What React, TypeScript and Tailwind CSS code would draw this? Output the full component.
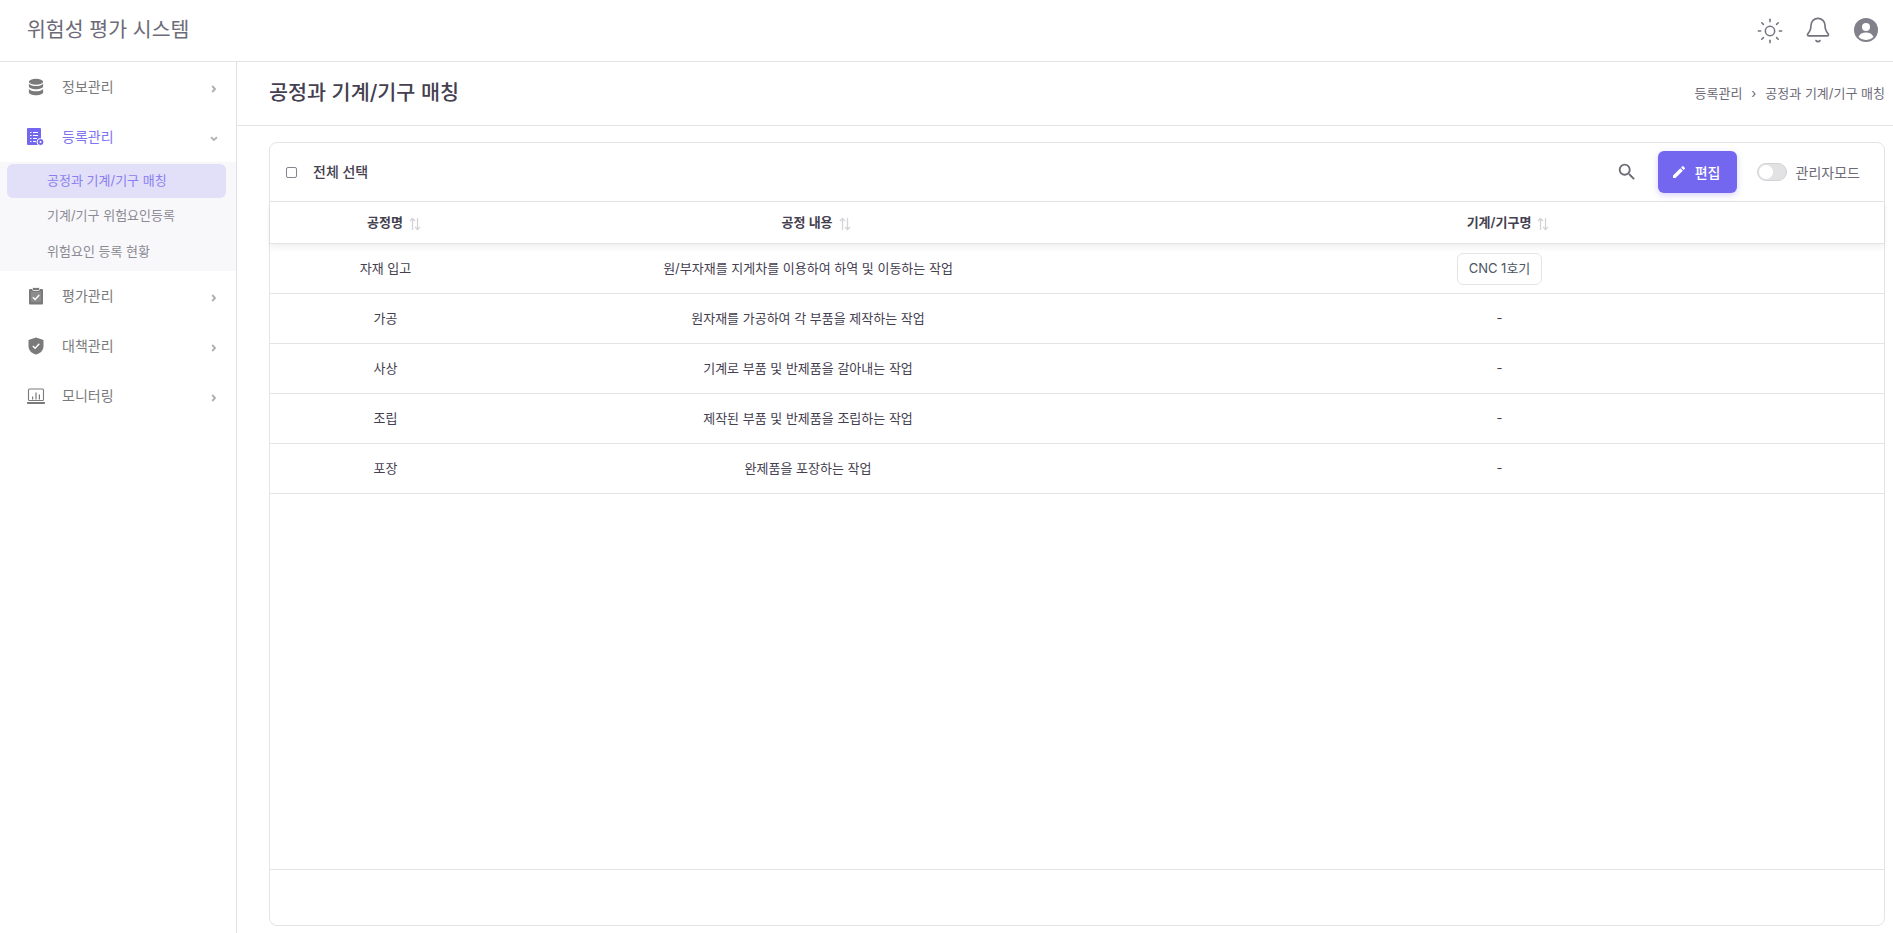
import React from "react";
import { Sun, Bell } from "lucide-react";

const font = "font-['Inter','Noto_Sans_CJK_KR',sans-serif]";

const IconDb = () => (
  <svg width="18" height="18" viewBox="0 0 24 24" fill="#7a7a7a">
    <ellipse cx="12" cy="5" rx="9.500" ry="4" />
    <path d="M2.500 7.600v3.400c0 2.200 4.300 4 9.500 4s9.500-1.800 9.500-4V7.600c-1.700 2-5.400 3.200-9.500 3.200S4.200 9.600 2.500 7.600z" />
    <path d="M2.500 14.600V19c0 2.200 4.300 4 9.500 4s9.500-1.800 9.500-4v-4.400c-1.700 2-5.400 3.200-9.500 3.200s-7.800-1.200-9.500-3.200z" />
  </svg>
);
const IconReg = () => (
  <svg width="18" height="18" viewBox="0 0 18 18">
    <path d="M1 0h12a1 1 0 0 1 1 1v16H1a1 1 0 0 1-1-1V1a1 1 0 0 1 1-1z" fill="#7367f0" />
    <path d="M3 4h1.500v1H3zM6 4h5v1H6zM3 7h1.500v1H3zM6 7h5v1H6zM3 10h1.500v1H3zM6 10h4v1H6zM3 13h1.500v1H3zM6 13h3v1H6z" fill="#fff" />
    <circle cx="13.500" cy="14" r="3.500" fill="#7367f0" stroke="#fff" />
    <circle cx="13.500" cy="14" r="1" fill="#fff" />
  </svg>
);
const IconClip = () => (
  <svg width="18" height="18" viewBox="0 0 18 18">
    <path d="M3 2h12a1 1 0 0 1 1 1v13.500a1 1 0 0 1-1 1H3a1 1 0 0 1-1-1V3a1 1 0 0 1 1-1z" fill="#7a7a7a" />
    <rect x="5.500" y="0.500" width="7" height="3" rx="1" fill="#7a7a7a" stroke="#fff" strokeWidth="0.800" />
    <rect x="4" y="5" width="10" height="10" fill="#8d8d8d" />
    <path d="M5.800 10.200l2.300 2.300 4.200-4.500" fill="none" stroke="#fff" strokeWidth="1.300" />
  </svg>
);
const IconShield = () => (
  <svg width="18" height="18" viewBox="0 0 18 18">
    <path d="M9 0.500L16.500 3v6c0 4.300-3 7.300-7.500 8.500C4.500 16.300 1.500 13.300 1.500 9V3z" fill="#7a7a7a" />
    <path d="M5.800 9l2.300 2.300 4.200-4.500" fill="none" stroke="#fff" strokeWidth="1.300" />
  </svg>
);
const IconMon = () => (
  <svg width="18" height="18" viewBox="0 0 18 18" fill="none">
    <rect x="1.500" y="2" width="15" height="11.500" rx="1" stroke="#7a7a7a" strokeWidth="1.100" />
    <path d="M0 15h18v1a1 1 0 0 1-1 1H1a1 1 0 0 1-1-1z" fill="#7a7a7a" />
    <path d="M5 9.500h1.200v3H5zM8.400 5.500h1.200v7H8.400zM11.800 7.500H13v5h-1.200z" fill="#7a7a7a" />
  </svg>
);

const Sort = () => (
  <svg width="12" height="14" viewBox="0 0 12 14" fill="none" stroke="#d4d4d8" strokeWidth="1.300" className="ml-[6px] mr-[-18px] mt-[2px]">
    <path d="M3.500 13V1.500M1 4l2.500-2.500L6 4" />
    <path d="M8.500 1v11.500M6 10l2.500 2.500L11 10" />
  </svg>
);

const ChevR = () => (
  <svg width="6" height="8" viewBox="0 0 6 8" fill="none" stroke="#b0b0b0" strokeWidth="1.900" className="mt-[4px] mr-[1px]">
    <path d="M1.200 1l2.800 3-2.800 3" />
  </svg>
);
const ChevD = () => (
  <svg width="8" height="6" viewBox="0 0 8 6" fill="none" stroke="#b4b4b4" strokeWidth="1.900" className="mt-[4px]">
    <path d="M1 1.200l3 2.800 3-2.800" />
  </svg>
);

const Item = ({ icon, label, active = false, open = false }: { icon: React.ReactNode; label: string; active?: boolean; open?: boolean }) => (
  <div className="h-[50px] flex items-center pl-[27px] pr-[18px]">
    <span className="w-[35px] flex items-center">{icon}</span>
    <span className={`flex-1 text-[14px] ${active ? "text-[#7f74f1]" : "text-[#7a7a7a]"} -mt-[1px]`}>{label}</span>
    {open ? <ChevD /> : <ChevR />}
  </div>
);

const rows = [
  ["자재 입고", "원/부자재를 지게차를 이용하여 하역 및 이동하는 작업", "chip"],
  ["가공", "원자재를 가공하여 각 부품을 제작하는 작업", "-"],
  ["사상", "기계로 부품 및 반제품을 갈아내는 작업", "-"],
  ["조립", "제작된 부품 및 반제품을 조립하는 작업", "-"],
  ["포장", "완제품을 포장하는 작업", "-"],
];

const cols = "grid grid-cols-[230px_614px_1fr]";

export default function App() {
  return (
    <div className={`${font} h-[933px] w-[1893px] overflow-hidden bg-white flex flex-col text-[#444050]`}>
      <header className="h-[62px] shrink-0 border-b border-[#e4e4e6] flex items-center justify-between pl-[27px] pr-[14px]">
        <div className="text-[20.500px] text-[#6d6b77] -mt-[1px]">위험성 평가 시스템</div>
        <div className="flex items-center text-[#75727f]">
          <Sun size={28} strokeWidth={1.300} />
          <Bell size={28} strokeWidth={1.400} className="ml-[20px] -mt-[2px]" />
          <svg width="24" height="24" viewBox="0 0 24 24" className="ml-[22px] mr-[1px] -mt-[1px]">
            <circle cx="12" cy="12" r="12" fill="#82808b" />
            <circle cx="12" cy="9" r="4" fill="#fff" />
            <path d="M4.500 19c1.200-3.200 4-4.500 7.500-4.500s6.300 1.300 7.500 4.500A10 10 0 0 1 12 22a10 10 0 0 1-7.500-3z" fill="#fff" />
          </svg>
        </div>
      </header>
      <div className="flex flex-1 min-h-0">
        <aside className="w-[237px] shrink-0 border-r border-[#e0e0e4]">
          <Item icon={<IconDb />} label="정보관리" />
          <Item icon={<IconReg />} label="등록관리" active open />
          <div className="bg-[#f8f8fa] h-[109px] pt-[2px] pl-[7px] pr-[10px] text-[13px] text-[#8c8a94]">
            <div className="h-[34px] rounded-[6px] bg-[#e2dff8] text-[#8a7ff2] flex items-center pl-[40px]">공정과 기계/기구 매칭</div>
            <div className="h-[36px] flex items-center pl-[40px]">기계/기구 위험요인등록</div>
            <div className="h-[36px] flex items-center pl-[40px]">위험요인 등록 현황</div>
          </div>
          <Item icon={<IconClip />} label="평가관리" />
          <Item icon={<IconShield />} label="대책관리" />
          <Item icon={<IconMon />} label="모니터링" />
        </aside>
        <main className="flex-1 min-w-0 flex flex-col">
          <div className="h-[64px] shrink-0 border-b border-[#e4e4e6] flex items-center justify-between pl-[32px] pr-[8px]">
            <h1 className="text-[20.700px] font-medium text-[#444050] mt-[-1px]">공정과 기계/기구 매칭</h1>
            <div className="text-[13px] text-[#6d6b77] flex items-center">
              <span>등록관리</span>
              <span className="mx-[9px]">›</span>
              <span>공정과 기계/기구 매칭</span>
            </div>
          </div>
          <div className="flex-1 min-h-0 pt-[16px] pb-[7px] pl-[32px] pr-[8px]">
            <div className="h-full rounded-[8px] border border-[#e4e4e6] flex flex-col">
              <div className="h-[59px] shrink-0 border-b border-[#e4e4e6] flex items-center pl-[16px] pr-[24px]">
                <span className="w-[11px] h-[11px] rounded-[2px] border border-[#85838e]" />
                <span className="ml-[16px] -mt-[1px] text-[14px] font-medium text-[#444050]">전체 선택</span>
                <div className="flex-1" />
                <svg width="22" height="22" viewBox="0 0 24 24" fill="#6d6b77">
                  <path d="M15.500 14h-.79l-.28-.27A6.470 6.470 0 0 0 16 9.500 6.500 6.500 0 1 0 9.500 16c1.610 0 3.090-.59 4.230-1.570l.27.28v.79l5 4.990L20.490 19l-4.990-5zm-6 0C7.010 14 5 11.990 5 9.500S7.010 5 9.500 5 14 7.010 14 9.500 11.990 14 9.500 14z" />
                </svg>
                <button className="ml-[20px] w-[79px] h-[42px] rounded-[6px] bg-[#7367f0] text-white text-[14px] font-medium flex items-center justify-center gap-[8px] pr-[3px] shadow-[0_2px_6px_rgba(115,103,240,0.3)]">
                  <svg width="16" height="16" viewBox="0 0 24 24" fill="#fff">
                    <path d="M3 17.250V21h3.750L17.810 9.940l-3.750-3.750L3 17.250zM20.710 7.040a1 1 0 0 0 0-1.410l-2.340-2.340a1 1 0 0 0-1.410 0l-1.830 1.830 3.750 3.750 1.830-1.830z" />
                  </svg>
                  <span>편집</span>
                </button>
                <span className="ml-[20px] w-[30px] h-[18px] rounded-full bg-[#e2e2e4] border border-[#d3d3d6] flex items-center pl-[1px]">
                  <span className="w-[14px] h-[14px] rounded-full bg-white" />
                </span>
                <span className="ml-[9px] text-[14px] text-[#6d6b77]">관리자모드</span>
              </div>
              <div className={`${cols} h-[42px] shrink-0 relative shadow-[0_3px_6px_rgba(47,43,61,0.08)] border-b border-[#e4e4e6] text-[13px] font-semibold text-[#444050]`}>
                <div className="flex items-center justify-center">공정명<Sort /></div>
                <div className="flex items-center justify-center">공정 내용<Sort /></div>
                <div className="flex items-center justify-center">기계/기구명<Sort /></div>
              </div>
              <div className="flex-1 min-h-0">
                {rows.map((r) => (
                  <div key={r[0]} className="grid grid-cols-[231px_614px_1fr] h-[50px] border-b border-[#e4e4e6] text-[13px] text-[#444050]">
                    <div className="flex items-center justify-center">{r[0]}</div>
                    <div className="flex items-center justify-center">{r[1]}</div>
                    <div className="flex items-center justify-center">
                      {r[2] === "chip" ? (
                        <span className="h-[32px] w-[85px] rounded-[6px] border border-[#e4e4e6] flex items-center justify-center text-[#4b5563]">CNC 1호기</span>
                      ) : (
                        r[2]
                      )}
                    </div>
                  </div>
                ))}
              </div>
              <div className="h-[56px] shrink-0 border-t border-[#e4e4e6]" />
            </div>
          </div>
        </main>
      </div>
    </div>
  );
}
